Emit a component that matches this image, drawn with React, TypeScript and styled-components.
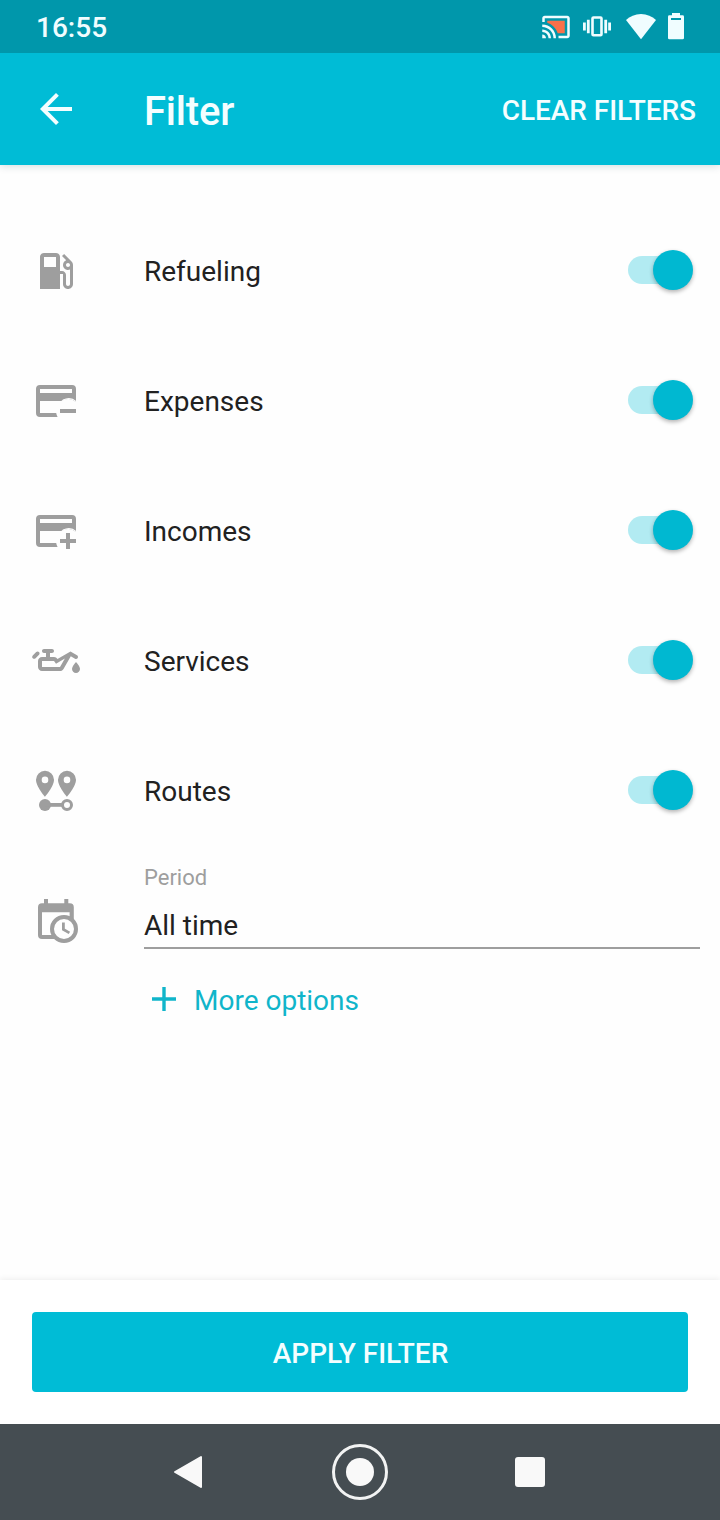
import React from 'react';
import styled, { createGlobalStyle } from 'styled-components';

const accent = '#00bcd6';
const grey = '#9e9e9e';

const GlobalStyle = createGlobalStyle`
  * { box-sizing: border-box; }
  body { margin: 0; background: #fff; font-family: Roboto, "Liberation Sans", sans-serif; }
  button { border: 0; padding: 0; background: none; font: inherit; color: inherit; }
  svg { display: block; flex: none; }
`;

const Screen = styled.div`
  display: flex;
  flex-direction: column;
  width: 720px;
  height: 1520px;
  background: #fefefe;
`;

const StatusBar = styled.header`
  display: flex;
  justify-content: space-between;
  flex: none;
  z-index: 1;
  height: 53px;
  padding: 0 36px 0 36px;
  background: #0097ab;
  color: #f0fdff;
`;

const Clock = styled.span`
  font-size: 28px;
  font-weight: 500;
  line-height: 56px;
`;

const StatusIcons = styled.div`
  display: flex;
  align-items: center;
`;

const AppBar = styled.div`
  display: flex;
  align-items: center;
  flex: none;
  height: 112px;
  padding: 0 24px 0 32px;
  background: ${accent};
  color: #f4feff;
  box-shadow: 0 1px 8px rgba(0, 60, 70, 0.18);
`;

const BackButton = styled.button`
  width: 48px;
  height: 48px;
`;

const Title = styled.h1`
  flex: 1;
  margin: 6px 0 0 64px;
  font-size: 40px;
  font-weight: 500;
  letter-spacing: -0.2px;
  line-height: 48px;
`;

const ClearButton = styled.button`
  padding-top: 4px;
  font-size: 28px;
  font-weight: 500;
  letter-spacing: -0.05px;
  line-height: 36px;
`;

const Content = styled.main`
  flex: 1;
  padding-top: 41px;
`;

const Row = styled.label`
  display: flex;
  align-items: center;
  height: 130px;
  padding: 0 27px 0 32px;
  color: ${grey};
`;

const RowLabel = styled.span`
  flex: 1;
  margin-left: 64px;
  padding-top: 2px;
  font-size: 28px;
  line-height: 36px;
  color: #212121;
`;

const Track = styled.span`
  display: flex;
  align-items: center;
  justify-content: flex-end;
  width: 65px;
  height: 28px;
  margin-bottom: 2px;
  border-radius: 14px;
  background: linear-gradient(to right, #b2ebf2 50px, transparent 50px);
`;

const Thumb = styled.span`
  width: 40px;
  height: 40px;
  border-radius: 50%;
  background: #00b8d1;
  box-shadow: 0 2px 4px rgba(0, 0, 0, 0.3);
`;

const PeriodRow = styled.div`
  display: flex;
  padding: 8px 20px 0 32px;
  color: ${grey};

  & > svg { margin-top: 33px; }
`;

const Field = styled.div`
  flex: 1;
  height: 85px;
  margin-left: 64px;
  padding-top: 1px;
  border-bottom: 2px solid ${grey};
`;

const FieldLabel = styled.div`
  font-size: 22px;
  line-height: 26px;
`;

const FieldValue = styled.div`
  margin-top: 17px;
  font-size: 28px;
  line-height: 36px;
  color: #212121;
`;

const MoreButton = styled.button`
  display: flex;
  align-items: center;
  gap: 18px;
  margin: 34px 0 0 152px;
  font-size: 28px;
  line-height: 36px;
  color: #10b5ca;

  & > svg { margin-bottom: 4px; }
`;

const Footer = styled.footer`
  flex: none;
  height: 144px;
  padding: 32px;
  background: #fff;
  box-shadow: 0 -1px 6px rgba(0, 0, 0, 0.07);
`;

const ApplyButton = styled.button`
  width: 100%;
  height: 80px;
  padding: 3px 0 0 1px;
  border-radius: 4px;
  background: ${accent};
  color: #f4feff;
  font-size: 28px;
  font-weight: 500;
`;

const NavBar = styled.nav`
  display: flex;
  align-items: center;
  flex: none;
  height: 96px;
  padding-left: 172px;
  background: #454d52;
`;

const Icon = ({ children }: { children: React.ReactNode }) => (
  <svg width="48" height="48" viewBox="0 0 48 48" fill="currentColor">{children}</svg>
);

const FuelIcon = () => (
  <Icon>
    <path transform="scale(2)" d="M19.77 7.23l.01-.01-3.72-3.72L15 4.56l2.11 2.11c-.94.36-1.61 1.26-1.61 2.33 0 1.38 1.12 2.5 2.5 2.5.36 0 .69-.08 1-.21v7.21c0 .55-.45 1-1 1s-1-.45-1-1V14c0-1.1-.9-2-2-2h-1V5c0-1.1-.9-2-2-2H6c-1.1 0-2 .9-2 2v16h10v-7.5h1.5v5c0 1.38 1.12 2.5 2.5 2.5s2.5-1.12 2.5-2.5V9c0-.69-.28-1.32-.73-1.77zM12 10H6V5h6v5zm6 0c-.55 0-1-.45-1-1s.45-1 1-1 1 .45 1 1-.45 1-1 1z" />
  </Icon>
);

const CardIcon = ({ plus }: { plus?: boolean }) => (
  <Icon>
    <path fillRule="evenodd" d="M8 8H40a4 4 0 0 1 4 4V25.1A12 12 0 0 0 29.4 24H8V36H24.2A12 12 0 0 0 25.6 40H8a4 4 0 0 1-4-4V12a4 4 0 0 1 4-4ZM8 12V16H40V12Z" />
    <path fill="#fefefe" d="M28.5 25A12 12 0 0 1 44.5 25.4V24.2A12 12 0 0 0 31 22.6Z" />
    <path d={plus ? 'M28 32h6v-6h4v6h6v4h-6v6h-4v-6h-6z' : 'M28 32h16v4H28z'} />
  </Icon>
);

const OilIcon = () => (
  <Icon>
    <path transform="scale(2)" fillRule="evenodd" d="M22 12.5C22 12.5 24 14.67 24 16C24 17.1 23.1 18 22 18C20.9 18 20 17.1 20 16C20 14.67 22 12.5 22 12.5M6 6H10C10.55 6 11 6.45 11 7C11 7.55 10.55 8 10 8H9V10H11C11.74 10 12.39 10.4 12.73 11L19.24 7.24L22.5 9.13C23 9.4 23.14 10 22.87 10.5C22.59 10.97 22 11.14 21.5 10.86L19.4 9.65L15.75 15.97C15.41 16.58 14.75 17 14 17H5C3.9 17 3 16.1 3 15V12C3 10.9 3.9 10 5 10H7V8H6C5.45 8 5 7.55 5 7C5 6.45 5.45 6 6 6M5 12V15H14L16.43 10.79L12 13.34L11 12H5M.38 9.21L2.09 7.5C2.5 7.11 3.11 7.11 3.5 7.5C3.89 7.89 3.89 8.5 3.5 8.91L1.79 10.62C1.4 11 .77 11 .38 10.62C0 10.23 0 9.6 .38 9.21Z" />
  </Icon>
);

const pin = 'a9 9 0 0 1 9 9c0 6.8-9 17-9 17s-9-10.2-9-17a9 9 0 0 1 9-9Zm0 5.8a3.3 3.3 0 1 0 0 6.6a3.3 3.3 0 0 0 0-6.6Z';

const RouteIcon = () => (
  <Icon>
    <path fillRule="evenodd" d={`M13 3.8${pin}M35 3.8${pin}`} />
    <circle cx="13" cy="37.9" r="6" />
    <path d="M13 36h18v3.8H13z" />
    <circle cx="35" cy="37.9" r="4.5" fill="none" stroke="currentColor" strokeWidth="3" />
  </Icon>
);

const CalendarIcon = () => (
  <Icon>
    <path fillRule="evenodd" d="M12 2h4v4.2h16.3V2h4v4.2h1.5a4 4 0 0 1 4 4V25H37.6V15.3H10V38H22v4H10a4 4 0 0 1-4-4V10.2a4 4 0 0 1 4-4h2Z" />
    <circle cx="32" cy="32" r="12" fill="#fefefe" stroke="currentColor" strokeWidth="4" />
    <path d="M31.4 25.5v7l6 3.4" fill="none" stroke="currentColor" strokeWidth="2.8" />
  </Icon>
);

const CastIcon = () => (
  <svg width="30" height="30" viewBox="0 0 24 24" fill="currentColor">
    <path fill="#f9704a" d="M5 7v1.63c3.96 1.28 7.09 4.41 8.37 8.37H19V7z" />
    <path d="M1 18v3h3c0-1.66-1.34-3-3-3zm0-4v2c2.76 0 5 2.24 5 5h2c0-3.87-3.13-7-7-7zm0-4v2c4.97 0 9 4.03 9 9h2c0-6.08-4.93-11-11-11zM21 3H3c-1.1 0-2 .9-2 2v3h2V5h18v14h-7v2h7c1.1 0 2-.9 2-2V5c0-1.1-.9-2-2-2z" />
  </svg>
);

const VibrateIcon = () => (
  <svg width="28" height="28" viewBox="0 0 28 28" fill="currentColor">
    <path d="M0 9.5h2.8v8H0zM3.9 6.8h2.8v13.4H3.9zM21.3 6.8h2.8v13.4h-2.8zM25.2 9.5H28v8h-2.8z" />
    <rect x="9.5" y="4.5" width="9" height="17.8" rx="1" fill="none" stroke="currentColor" strokeWidth="2.6" />
  </svg>
);

const WifiIcon = () => (
  <svg width="30" height="26" viewBox="0 0 30 26" fill="currentColor">
    <path d="M15 25.2L0 6C4 2.4 9 0 15 0s11 2.4 15 6Z" />
  </svg>
);

const BatteryIcon = () => (
  <svg width="16" height="27" viewBox="0 0 16 27" fill="currentColor">
    <path fillRule="evenodd" d="M4 0h8v2.3h2.6A1.4 1.4 0 0 1 16 3.7v21.2a1.4 1.4 0 0 1-1.4 1.4H1.4A1.4 1.4 0 0 1 0 24.9V3.7A1.4 1.4 0 0 1 1.4 2.3H4ZM3 5v2h10V5Z" />
  </svg>
);

const Gap = styled.span<{ $w: number }>`
  width: ${(p) => p.$w}px;
`;

const filters = [
  { label: 'Refueling', icon: <FuelIcon /> },
  { label: 'Expenses', icon: <CardIcon /> },
  { label: 'Incomes', icon: <CardIcon plus /> },
  { label: 'Services', icon: <OilIcon /> },
  { label: 'Routes', icon: <RouteIcon /> },
];

export default function App() {
  return (
    <Screen>
      <GlobalStyle />
      <StatusBar>
        <Clock>16:55</Clock>
        <StatusIcons>
          <CastIcon />
          <Gap $w={12} />
          <VibrateIcon />
          <Gap $w={15} />
          <WifiIcon />
          <Gap $w={12} />
          <BatteryIcon />
        </StatusIcons>
      </StatusBar>
      <AppBar>
        <BackButton aria-label="Back">
          <Icon><path transform="scale(2)" d="M20 11H7.83l5.59-5.59L12 4l-8 8 8 8 1.41-1.41L7.83 13H20v-2z" /></Icon>
        </BackButton>
        <Title>Filter</Title>
        <ClearButton>CLEAR FILTERS</ClearButton>
      </AppBar>
      <Content>
        {filters.map((f) => (
          <Row key={f.label}>
            {f.icon}
            <RowLabel>{f.label}</RowLabel>
            <Track><Thumb /></Track>
          </Row>
        ))}
        <PeriodRow>
          <CalendarIcon />
          <Field>
            <FieldLabel>Period</FieldLabel>
            <FieldValue>All time</FieldValue>
          </Field>
        </PeriodRow>
        <MoreButton>
          <svg width="24" height="24" viewBox="0 0 24 24" fill="currentColor">
            <path d="M10.3 0h3.4v10.3H24v3.4H13.7V24h-3.4V13.7H0v-3.4h10.3z" />
          </svg>
          More options
        </MoreButton>
      </Content>
      <Footer>
        <ApplyButton>APPLY FILTER</ApplyButton>
      </Footer>
      <NavBar>
        <svg width="376" height="60" viewBox="0 0 376 60" fill="#f9f9f9">
          <path d="M3 30L29 15V45Z" stroke="#f9f9f9" strokeWidth="2" strokeLinejoin="round" />
          <circle cx="188" cy="30" r="26.5" fill="none" stroke="#f2f3f3" strokeWidth="3" />
          <circle cx="188" cy="30" r="14" />
          <rect x="343" y="15" width="30" height="30" rx="3" />
        </svg>
      </NavBar>
    </Screen>
  );
}
